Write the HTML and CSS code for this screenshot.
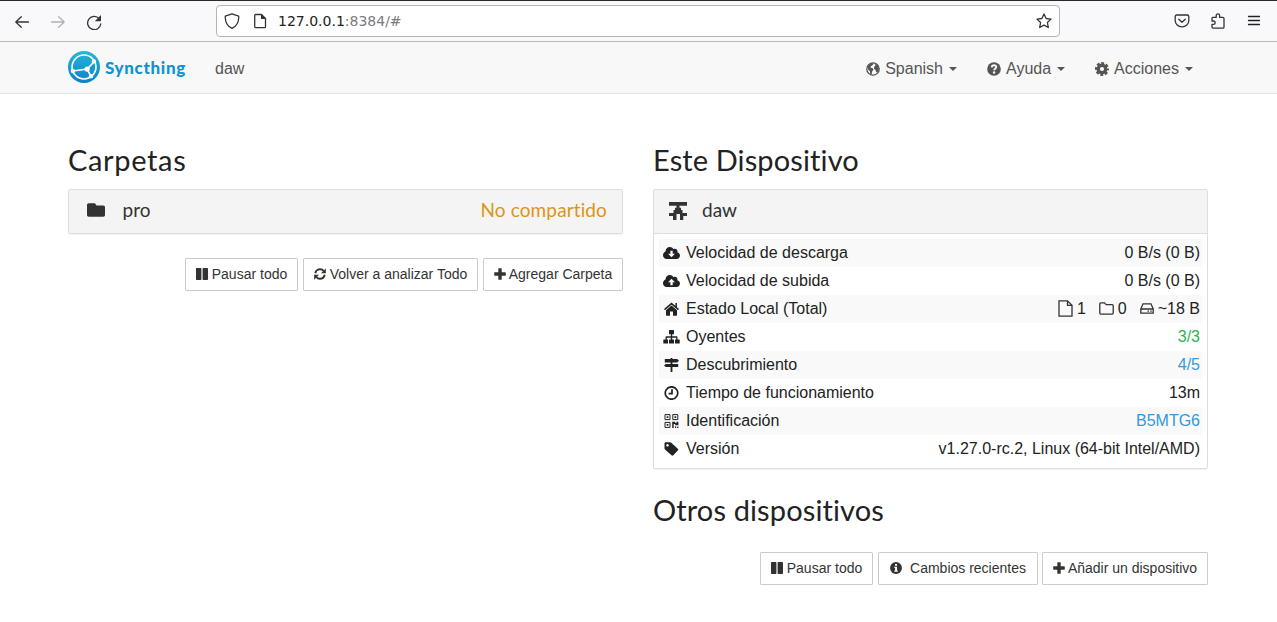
FILE: index.html
```
<!DOCTYPE html>
<html lang="es">
<head>
<meta charset="utf-8">
<title>Syncthing</title>
<link rel="stylesheet" href="styles.css">
</head>
<body>
<svg class="sprite" aria-hidden="true">
  <symbol id="pause" viewBox="0 0 12 12"><path d="M0 .7Q0 0 .7 0h4Q5.400 0 5.400.7v10.600q0 .7-.7.7H.7Q0 12 0 11.300zM6.600.7q0-.7.7-.7h4q.7 0 .7.7v10.600q0 .7-.7.7H7.300q-.7 0-.7-.7z"/></symbol>
  <symbol id="plus" viewBox="0 0 12 12"><path d="M4.300.8q0-.6.6-.6h2.200q.6 0 .6.600v3.500h3.500q.6 0 .6.600v2.200q0 .6-.6.6H7.700v3.500q0 .6-.6.6H4.900q-.6 0-.6-.6V7.700H.8q-.6 0-.6-.6V4.900q0-.6.6-.6h3.500z"/></symbol>
  <symbol id="folder" viewBox="0 64 512 384"><path d="M464 128H272l-48-64H48C21.500 64 0 85.500 0 112v288c0 26.500 21.500 48 48 48h416c26.500 0 48-21.500 48-48V176c0-26.500-21.500-48-48-48z"/></symbol>
  <symbol id="cloud" viewBox="0 32 640 448"><path d="M537.600 226.600c4.100-10.700 6.400-22.400 6.400-34.600 0-53-43-96-96-96-19.700 0-38.100 6-53.300 16.200C367 64.200 315.300 32 256 32c-88.400 0-160 71.600-160 160 0 2.700.1 5.400.2 8.100C40.200 219.800 0 273.200 0 336c0 79.500 64.500 144 144 144h368c70.700 0 128-57.300 128-128 0-61.900-44-113.600-102.400-125.400z"/></symbol>
</svg>

<header class="browser">
  <svg class="b-icon back" viewBox="0 0 16 16"><path d="M14.500 8H2M7.300 2.700 1.800 8l5.500 5.300"/></svg>
  <svg class="b-icon fwd" viewBox="0 0 16 16"><path d="M1.500 8H14M8.700 2.700 14.200 8l-5.500 5.300"/></svg>
  <svg class="b-icon reload" viewBox="0 0 16 16"><path d="M13.300 4.800A6.600 6.600 0 1 0 14.800 9.800"/><path class="solid" d="M15 1v5.600q0 .6-.6.6H8.800z"/></svg>
  <div class="urlbar">
    <svg class="b-icon" viewBox="0 0 16 16"><path d="M8 .8 14.700 3.100c.3 5-1.700 10-6.700 12.300C3 13.100 1 8.100 1.300 3.100z"/></svg>
    <svg class="b-icon page" viewBox="0 0 16 16"><path d="M3.200 1.500h6.300L13.500 5.500v8.200q0 1-1 1H3.700q-1 0-1-1V2.500q0-1 1-1z"/><path class="solid" d="M9 1l5 5H9z"/></svg>
    <span class="url">127.0.0.1<i>:8384/#</i></span>
    <svg class="b-icon star" viewBox="0 0 16 16"><path d="M8 1l2.100 4.500 4.900.6-3.600 3.400.9 5L8 12.100l-4.300 2.400.9-5L1 6.100l4.900-.6z"/></svg>
  </div>
  <svg class="b-icon pocket" viewBox="0 0 16 16"><path d="M2.700 2h10.600q1.500 0 1.500 1.500V7.500a6.800 6.300 0 0 1-13.600 0v-4Q1.200 2 2.700 2zM4.800 6.300 8 9.300l3.200-3"/></svg>
  <svg class="b-icon puzzle" viewBox="0 0 16 16"><path d="M2 5.300q0-.9.9-.9H6.200V2.600a1.700 1.700 0 0 1 3.400 0V4.400h3.200q1.200 0 1.200 1.200v8.300q0 1.200-1.200 1.200H3q-1 0-1-1V11.400h1.500a1.700 1.700 0 0 0 0-3.400H2z"/></svg>
  <svg class="b-icon menu" viewBox="0 0 16 16"><path d="M2.500 3.500h11M2.500 7.500h11M2.500 11.500h11"/></svg>
</header>

<nav class="navbar">
  <div class="container nav-row">
    <svg class="logo" viewBox="0 0 117 117">
      <defs><linearGradient id="g" x1="0" y1="1" x2="0" y2="0"><stop offset="0" stop-color="#0882c8"/><stop offset="1" stop-color="#26b6db"/></linearGradient></defs>
      <circle cx="58.500" cy="58.500" r="58.500" fill="url(#g)"/>
      <circle class="ring" cx="58.500" cy="58.500" r="43.700"/>
      <path class="ring" d="M94.700 40 70 66 19 73M70 66 84 93"/>
      <g fill="#fff"><circle cx="94.700" cy="38" r="8"/><circle cx="70" cy="66" r="9.500"/><circle cx="84" cy="92" r="8"/><circle cx="18" cy="73" r="8"/></g>
    </svg>
    <span class="brand">Syncthing</span>
    <span class="host">daw</span>
    <a class="menu-item lang"><svg class="n-icon" viewBox="0 0 16 16"><circle cx="8" cy="8" r="7.100" fill="none" stroke="currentColor" stroke-width="1.500"/><path d="M1.500 5 5 1.800l3.500-.8-.5 2.200-2.400 1.600L4.800 6.300l2.900.9.900 1.700-1.700 2-.4 3.600-1.700-.8-.3-3L2.500 8.500zM9.800 2l3.700 1.600 1.400 4.300-1.400 3.300-1.700.8-.9-3L9 7.500l.5-2.300 1.300-1z"/></svg><span>Spanish</span><b class="caret"></b></a>
    <a class="menu-item help"><svg class="n-icon" viewBox="0 0 16 16"><circle cx="8" cy="8" r="7.800"/><path class="cut" d="M5.400 6.200C5.600 2.800 10.800 3 10.500 6 10.300 7.700 8.100 7.700 8.100 9.500"/><circle cx="8.100" cy="12" r="1.350" fill="#f8f8f8"/></svg><span>Ayuda</span><b class="caret"></b></a>
    <a class="menu-item acts"><svg class="n-icon" viewBox="0 0 16 16"><circle cx="8" cy="8" r="4.300" fill="none" stroke="currentColor" stroke-width="3.800"/><circle cx="8" cy="8" r="6.600" fill="none" stroke="currentColor" stroke-width="2.800" stroke-dasharray="3.200 1.984" stroke-dashoffset="1.600"/></svg><span>Acciones</span><b class="caret"></b></a>
  </div>
</nav>

<main class="container columns">
  <section>
    <h3 class="h-folders">Carpetas</h3>
    <div class="panel">
      <div class="panel-head">
        <svg class="ic-folder"><use href="#folder"/></svg>
        <span class="title pro">pro</span>
        <span class="status">No compartido</span>
      </div>
    </div>
    <div class="buttons">
      <button class="w113"><svg class="bi"><use href="#pause"/></svg><span>Pausar todo</span></button>
      <button class="w175"><svg class="bi" viewBox="0 0 16 16"><path d="M1.700 7A6.400 6.400 0 0 1 12.800 3.800M14.300 9A6.400 6.400 0 0 1 3.200 12.200" fill="none" stroke="currentColor" stroke-width="2.500"/><path d="M15.800.5V7H9.300zM.2 15.500V9h6.500z"/></svg><span>Volver a analizar Todo</span></button>
      <button class="w140"><svg class="bi plus"><use href="#plus"/></svg><span>Agregar Carpeta</span></button>
    </div>
  </section>

  <section>
    <h3 class="h-device">Este Dispositivo</h3>
    <div class="panel">
      <div class="panel-head device-head">
        <svg class="ic-device" viewBox="0 0 18 18"><path d="M0 0h18v3.800h-7.500v2H12V8h1.500v3H18v3h-3.700v4h-3.300v-6H7.500v6H4v-4H0v-3h4.500V8H6V5.800h1.500v-2H0z"/></svg>
        <span class="title">daw</span>
      </div>
      <div class="rows">
        <div class="row"><svg class="ri"><use href="#cloud"/><path d="M7.400 4.800h2.300v3H12L8.500 11.200 5.100 7.800h2.300z" fill="#f9f9f9"/></svg><span>Velocidad de descarga</span><em>0 B/s (0 B)</em></div>
        <div class="row"><svg class="ri"><use href="#cloud"/><path d="M7.400 11.200h2.300V8.200H12L8.500 4.800 5.100 8.200h2.300z" fill="#fff"/></svg><span>Velocidad de subida</span><em>0 B/s (0 B)</em></div>
        <div class="row"><svg class="ri" viewBox="0 0 17 14"><path d="M8.500 3.600 14 8.200v4.900q0 .6-.6.6H10V9.500H7v4.200H3.600q-.6 0-.6-.6V8.200z"/><path d="M1.500 7.600 8.500 1.600l7 6M13.200 1v4" fill="none" stroke="currentColor" stroke-width="1.500"/></svg><span>Estado Local (Total)</span><em class="local"><svg class="file" viewBox="0 0 15 17"><path d="M1 .8h8.500L14 5.300v10.900H1zM9.500.8v4.500H14"/></svg>1<svg class="dir" viewBox="0 0 15 13"><path d="M1.700.8H5.500l1.700 1.800h6q1 0 1 1v7.500q0 1-1 1H1.800q-1 0-1-1V1.800q0-1 .9-1z"/></svg>0<svg class="disk" viewBox="0 0 14 13"><path d="M.8 7 3 1.800h8L13.200 7v4.200H.8zM.8 7h12.400M7.500 9.200h1.500M10.200 9.200h1.500"/></svg>~18 B</em></div>
        <div class="row"><svg class="ri" viewBox="0 0 17 14"><path d="M6 .5q0-.5.5-.5h4q.5 0 .5.500v3.300q0 .5-.5.5H9.200v2h4.400q.9 0 .9.900v2.200h1.700q.5 0 .5.500V13q0 .5-.5.500h-3.700q-.5 0-.5-.5V9.900q0-.5.500-.5h.7V7.700h-4v1.700h1.300q.5 0 .5.500V13q0 .5-.5.500h-4q-.5 0-.5-.5V9.900q0-.5.500-.5h1.300V7.700h-4v1.700h.7q.5 0 .5.500V13q0 .5-.5.500H.8q-.5 0-.5-.5V9.900q0-.5.500-.5h1.700V7.200q0-.9.900-.9h4.400v-2H6.500q-.5 0-.5-.5z"/></svg><span>Oyentes</span><em class="green">3/3</em></div>
        <div class="row"><svg class="ri" viewBox="0 0 17 14"><path d="M7.600 0h1.800v1h4.800L16 2.700l-1.800 1.700H9.400v1.500h5.800v3.200H9.400V14H7.600V9.100H2.800L1 7.500l1.800-1.600h4.800V4.400H1.800V1h5.800z"/></svg><span>Descubrimiento</span><em class="blue">4/5</em></div>
        <div class="row"><svg class="ri" viewBox="0 0 17 14"><path d="M8.500.8a6.200 6.200 0 1 1-.01 0zM9 3.200v4.500H5.600" fill="none" stroke="currentColor" stroke-width="1.700"/></svg><span>Tiempo de funcionamiento</span><em>13m</em></div>
        <div class="row"><svg class="ri" viewBox="0 0 17 14"><path d="M2 .6h5v5H2zM9.800.6h5v5h-5zM2 8.400h5v5H2z" fill="none" stroke="currentColor" stroke-width="1"/><path d="M3.700 2.300h1.700V4H3.700zM11.500 2.300h1.700V4h-1.700zM3.700 10h1.700v1.700H3.700zM9.200 7.800h3v1.300h1.300V7.800h1.900v3.500h-3.200v-1.200h-1.500V14H9.200zM12 12.500h1.300V14H12zM14.200 12.500h1.200V14h-1.200z"/></svg><span>Identificación</span><em class="blue">B5MTG6</em></div>
        <div class="row"><svg class="ri" viewBox="0 0 17 14"><path fill-rule="evenodd" d="M1.500 1.500Q1.500.3 2.700.3H7q.8 0 1.300.5l6.500 6q.9.900 0 1.800l-4.500 4.700q-.9.900-1.800 0L2 7.500q-.5-.5-.5-1.200zM4.500 2a1.300 1.300 0 1 0 .01 0z"/></svg><span>Versión</span><em>v1.27.0-rc.2, Linux (64-bit Intel/AMD)</em></div>
      </div>
    </div>
    <h3 class="others">Otros dispositivos</h3>
    <div class="buttons">
      <button class="w113"><svg class="bi"><use href="#pause"/></svg><span>Pausar todo</span></button>
      <button class="w160"><svg class="bi info" viewBox="0 0 16 16"><circle cx="8" cy="8" r="7.900"/><path d="M6.700 2.500h2.700v2.400H6.700zM5.800 6.400h3.600v5h1v1.700H5.800v-1.700h1V8h-1z" fill="#fff"/></svg><span>Cambios recientes</span></button>
      <button class="w166"><svg class="bi plus"><use href="#plus"/></svg><span>Añadir un dispositivo</span></button>
    </div>
  </section>
</main>
</body>
</html>
```
FILE: styles.css
```
* { box-sizing: border-box; }
body {
  margin: 0;
  height: 622px;
  overflow: hidden;
  background: #fff;
  color: #222;
  font: 16px/28px "Liberation Sans", Arial, sans-serif;
}
svg { fill: currentColor; flex: none; display: block; }
.sprite { display: none; }

.browser {
  height: 42px;
  display: flex;
  align-items: center;
  background: #f9f9fb;
  border-top: 1px solid #2b292d;
  border-bottom: 1px solid #b9b9bb;
  padding-left: 14px;
}
.b-icon { width: 16px; height: 16px; fill: none; stroke: #333338; stroke-width: 1.3; stroke-linecap: round; stroke-linejoin: round; }
.b-icon .solid { fill: #333338; stroke: none; }
.back, .fwd, .reload { margin-top: 1px; }
.fwd { margin-left: 20px; stroke: #b0b0b2; }
.reload { margin-left: 20px; }
.urlbar {
  width: 844px;
  height: 32px;
  margin-left: 114px;
  padding: 0 7px;
  display: flex;
  align-items: center;
  background: #fff;
  border: 1px solid #b5b5b8;
  border-radius: 4px;
}
.page { margin-left: 12px; }
.url { margin-left: 10px; font: 14px "DejaVu Sans", sans-serif; color: #222; }
.url i { font-style: normal; color: #7b7b7f; }
.star { margin-left: auto; }
.pocket { margin-left: 114px; }
.puzzle { margin-left: 20px; }
.menu { margin-left: 20px; stroke: #222; }

.container { width: 1140px; margin-left: 68px; }
.navbar { height: 52px; background: #f8f8f8; border-bottom: 1px solid #e2e2e2; color: #555; }
.nav-row { height: 51px; display: flex; align-items: center; padding-right: 15px; }
.logo { width: 32px; height: 32px; margin-bottom: 1px; }
.ring { fill: none; stroke: #fff; stroke-width: 6; }
.brand { width: 82px; margin-left: 5px; color: #1092d3; font: 900 17px/28px Lato, sans-serif; letter-spacing: .65px; font-variant-ligatures: none; white-space: nowrap; }
.host { margin-left: 28px; margin-top: 3px; }
.menu-item { display: flex; align-items: center; margin-top: 3px; margin-left: 30px; }
.lang { margin-left: auto; }
.n-icon { width: 14px; height: 14px; margin-right: 5px; margin-bottom: 1px; }
.cut { fill: none; stroke: #f8f8f8; stroke-width: 2.200; }
.caret { margin-left: 6px; border: 4px solid transparent; border-top-color: #555; border-bottom: 0; }

.columns { display: grid; grid-template-columns: 555px 555px; gap: 30px; padding-top: 49px; }
h3 { margin: 0; height: 46px; font: 400 29px/34px Lato, sans-serif; font-variant-ligatures: none; color: #222; white-space: nowrap; }
.h-folders { letter-spacing: .65px; }
.h-device { letter-spacing: .12px; }
.panel { border: 1px solid #ddd; border-radius: 2px; box-shadow: 0 1px 1px rgba(0,0,0,.05); }
.panel-head { height: 43px; padding: 0 15px 2px 18px; display: flex; align-items: center; background: #f4f4f4; color: #333; font: 19px/28px Lato, sans-serif; font-variant-ligatures: none; }
.device-head { height: 44px; border-bottom: 1px solid #ddd; padding-left: 15px; }
.ic-folder { width: 18px; height: 14px; margin-bottom: 1px; }
.ic-device { width: 18px; height: 18px; margin-top: 1px; }
.title { margin-left: 15px; margin-bottom: 1px; }
.pro { margin-left: 17.500px; }
.status { margin-left: auto; margin-bottom: 1px; color: #de9515; letter-spacing: .12px; }
.rows { padding: 5px; }
.row { display: flex; align-items: center; height: 28px; padding: 0 2px 0 4px; }
.row:nth-child(odd) { background: #f9f9f9; }
.ri { width: 17px; height: 14px; margin: 0 6px 1px 0; }
em { margin-left: auto; font-style: normal; }
.green { color: #29b74e; }
.blue { color: #3498db; }
.local { display: flex; align-items: center; }
.local svg { fill: none; stroke: #333; stroke-width: 1.3; margin-bottom: 1px; }
.local .file { width: 15px; height: 17px; margin-right: 4px; }
.local .dir { width: 15px; height: 13px; margin-right: 4px; margin-left: 13px; }
.local .disk { width: 14px; height: 13px; margin-right: 4px; margin-left: 13px; }

.buttons { display: flex; justify-content: flex-end; gap: 5px; margin-top: 24px; }
button {
  height: 33px;
  padding: 0 0 2px;
  display: flex;
  align-items: center;
  justify-content: center;
  background: #fff;
  border: 1px solid #ccc;
  border-radius: 1px;
  color: #333;
  font: 14px/20px "Liberation Sans", Arial, sans-serif;
  white-space: nowrap;
}
.bi { width: 12px; height: 12px; margin-right: 4px; }
.plus { margin-right: 3px; }
.info { margin-right: 8px; }
.w113 { width: 113px; }
.w175 { width: 175px; }
.w140 { width: 140px; }
.w160 { width: 160px; }
.w166 { width: 166px; margin-left: -1px; }
.others { margin-top: 24px; letter-spacing: .12px; }
.others + .buttons { margin-top: 13px; }
```
